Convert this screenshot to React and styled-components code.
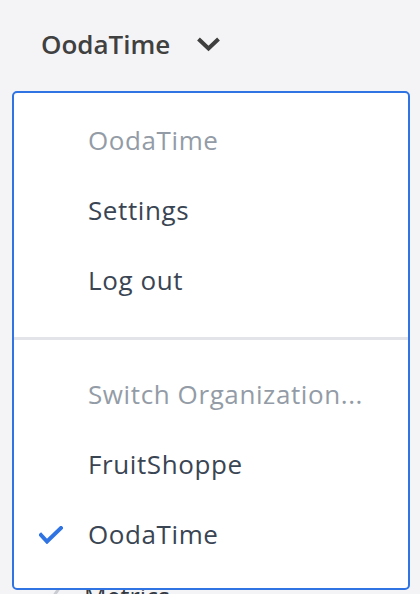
import React from "react";
import styled, { createGlobalStyle } from "styled-components";

const GlobalStyle = createGlobalStyle`
  html, body {
    margin: 0;
    padding: 0;
    background: #f4f4f6;
    font-family: "Open Sans", "Noto Sans", sans-serif;
  }
  * { box-sizing: border-box; }
`;

const Page = styled.div`
  position: relative;
  width: 420px;
  height: 594px;
  overflow: hidden;
`;

const Header = styled.header`
  display: flex;
  align-items: center;
  gap: 26px;
  height: 88px;
  padding-left: 41px;
  color: #404040;
  font-size: 26px;
  font-weight: 600;
`;

const Nav = styled.ul`
  list-style: none;
  margin: 0;
  padding: 488px 0 0 36px;
`;

const NavItem = styled.li`
  display: flex;
  align-items: center;
  gap: 22px;
  height: 40px;
  color: #333a44;
  font-size: 25px;
`;

const Menu = styled.div`
  position: absolute;
  top: 91px;
  left: 12px;
  width: 398px;
  height: 499px;
  background: #ffffff;
  border: 2px solid #2f74e2;
  border-radius: 5px;
  display: flex;
  flex-direction: column;
`;

const Section = styled.div`
  padding: ${(p) => p.$pad};
`;

const Divider = styled.hr`
  margin: 0;
  border: 0;
  height: 3px;
  background: #e2e4ea;
`;

const Item = styled.div`
  display: grid;
  grid-template-columns: 24px 1fr;
  column-gap: 25px;
  align-items: center;
  height: 70px;
  padding-left: 25px;
  font-size: 26px;
  letter-spacing: 0.6px;
  color: ${(p) => (p.$muted ? "#939ca6" : "#3a4553")};
`;

const Check = () => (
  <svg width="24" height="18" viewBox="0 0 24 18" fill="none">
    <polyline
      points="2,9 8,15.5 22,2"
      stroke="#2f74e2"
      strokeWidth="4"
      strokeLinecap="square"
    />
  </svg>
);

const Chevron = () => (
  <svg width="25" height="16" viewBox="0 0 25 16" fill="none">
    <polyline points="2.5,3 12.5,12.5 22.5,3" stroke="#3f3f3f" strokeWidth="4" />
  </svg>
);

const ChartIcon = () => (
  <svg width="26" height="26" viewBox="0 0 26 26" fill="none">
    <polyline
      points="2,22 10,13 15,17 24,4"
      stroke="#c9ccd2"
      strokeWidth="3"
      strokeLinejoin="round"
    />
  </svg>
);

const MenuItem = ({ label, muted, checked }) => (
  <Item $muted={muted}>
    <span>{checked && <Check />}</span>
    <span>{label}</span>
  </Item>
);

export default function App() {
  return (
    <Page>
      <GlobalStyle />
      <Header>
        <span>OodaTime</span>
        <Chevron />
      </Header>
      <Nav>
        <NavItem>
          <ChartIcon />
          <span>Metrics</span>
        </NavItem>
      </Nav>
      <Menu>
        <Section $pad="12px 0 22px">
          <MenuItem label="OodaTime" muted />
          <MenuItem label="Settings" />
          <MenuItem label="Log out" />
        </Section>
        <Divider />
        <Section $pad="19px 0 0">
          <MenuItem label="Switch Organization..." muted />
          <MenuItem label="FruitShoppe" />
          <MenuItem label="OodaTime" checked />
        </Section>
      </Menu>
    </Page>
  );
}
